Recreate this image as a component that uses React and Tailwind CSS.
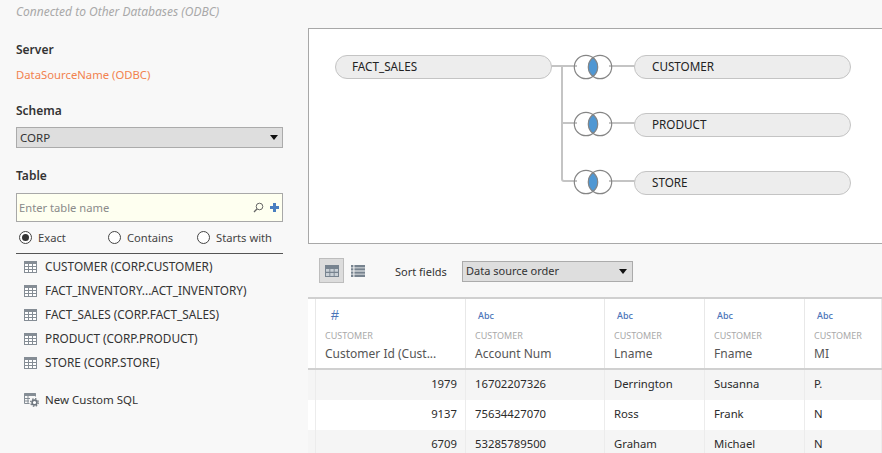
import React from 'react';

const font = { fontFamily: '"Noto Sans", "Open Sans", sans-serif' };

const tables = [
  'CUSTOMER (CORP.CUSTOMER)',
  'FACT_INVENTORY...ACT_INVENTORY)',
  'FACT_SALES (CORP.FACT_SALES)',
  'PRODUCT (CORP.PRODUCT)',
  'STORE (CORP.STORE)',
];

const columns = [
  { name: 'Customer Id (Cust...', type: '#', width: 'w-[150px]' },
  { name: 'Account Num', type: 'Abc', width: 'w-[139px]' },
  { name: 'Lname', type: 'Abc', width: 'w-[100px]' },
  { name: 'Fname', type: 'Abc', width: 'w-[100px]' },
  { name: 'MI', type: 'Abc', width: 'flex-1' },
];

const rows = [
  ['1979', '16702207326', 'Derrington', 'Susanna', 'P.'],
  ['9137', '75634427070', 'Ross', 'Frank', 'N'],
  ['6709', '53285789500', 'Graham', 'Michael', 'N'],
];

const joins = [
  { name: 'CUSTOMER', top: 'top-[26px]', iconTop: 'top-[25px]' },
  { name: 'PRODUCT', top: 'top-[84px]', iconTop: 'top-[82px]' },
  { name: 'STORE', top: 'top-[142px]', iconTop: 'top-[140px]' },
];

function GridIcon() {
  return (
    <svg width="13" height="12" viewBox="0 0 13 12" className="text-[#858d95]">
      <rect x="0.5" y="0.5" width="12" height="11" fill="#fff" stroke="currentColor" />
      <path d="M0 0.5h13v2.5H0z" fill="currentColor" />
      <path d="M4.5 3v8M8.5 3v8M1 5.5h11M1 8.5h11" stroke="currentColor" fill="none" />
    </svg>
  );
}

function SolidGridIcon() {
  return (
    <svg width="14" height="12" viewBox="0 0 14 12" className="text-[#77838f]">
      <rect width="14" height="12" fill="currentColor" />
      <path d="M1 4h3.4v2.8H1zM5.3 4h3.4v2.8H5.3zM9.6 4H13v2.8H9.6zM1 8h3.4v3H1zM5.3 8h3.4v3H5.3zM9.6 8H13v3H9.6z" fill="#c9d0d6" />
    </svg>
  );
}

function ListIcon() {
  return (
    <svg width="14" height="12" viewBox="0 0 14 12" className="ml-[7px] text-[#77838f]" fill="currentColor">
      <path d="M0 0h2.4v2.4H0zM3.4 0H14v2.4H3.4zM0 3.2h2.4v2.4H0zM3.4 3.2H14v2.4H3.4zM0 6.4h2.4v2.4H0zM3.4 6.4H14v2.4H3.4zM0 9.6h2.4V12H0zM3.4 9.6H14V12H3.4z" />
    </svg>
  );
}

function SqlIcon() {
  return (
    <svg width="15" height="14" viewBox="0 0 15 14" className="text-[#858d95]">
      <path d="M0.5 0.5h11v3M0.5 0.5v10h5" fill="none" stroke="currentColor" />
      <path d="M0 0.5h12v2.5H0z" fill="currentColor" />
      <path d="M4 3v7.5M1 5.5h5M1 8h4" stroke="currentColor" fill="none" />
      <circle cx="10.5" cy="9.5" r="2.4" fill="#fff" stroke="#6f777f" strokeWidth="1.6" />
      <circle cx="10.5" cy="9.5" r="3.8" fill="none" stroke="#6f777f" strokeWidth="1.3" strokeDasharray="1.5 1.5" />
    </svg>
  );
}

function Caret() {
  return <span className="w-0 h-0 border-x-[4px] border-x-transparent border-t-[5px] border-t-[#111]" />;
}

function Radio({ label, checked, className }) {
  return (
    <div className={`flex items-center gap-[6px] ${className}`}>
      <span className="w-[13px] h-[13px] rounded-full border border-[#444] bg-white flex items-center justify-center">
        {checked && <span className="w-[7px] h-[7px] rounded-full bg-[#333]" />}
      </span>
      <span>{label}</span>
    </div>
  );
}

function JoinIcon() {
  return (
    <svg width="40" height="26" viewBox="0 0 40 26">
      <path d="M20 3.2a12 12 0 0 1 0 19.6a12 12 0 0 1 0-19.6z" fill="#4f97d3" />
      <circle cx="13" cy="13" r="11.7" fill="none" stroke="#858585" strokeWidth="1.2" />
      <circle cx="27" cy="13" r="11.7" fill="none" stroke="#858585" strokeWidth="1.2" />
    </svg>
  );
}

function Pill({ children, className }) {
  return (
    <div className={`absolute w-[217px] h-[24px] rounded-full bg-[#ededed] border border-[#c4c4c4] flex items-center text-[11.7px] text-[#222] ${className}`}>
      {children}
    </div>
  );
}

function Canvas() {
  return (
    <div className="relative h-[216px] bg-white border border-[#a8a8a8] border-r-0 overflow-hidden">
      <svg width="330" height="216" className="absolute left-0 top-0" fill="none" stroke="#c4c4c4" strokeWidth="2">
        <path d="M240 37H268M253 37V150Q253 152 255 152H268M253 94H268" />
        <path d="M300 37H328M300 94H328M300 152H328" />
      </svg>
      <Pill className="left-[26px] top-[26px] pl-[16px]">FACT_SALES</Pill>
      {joins.map((join) => (
        <React.Fragment key={join.name}>
          <div className={`absolute left-[264px] ${join.iconTop}`}>
            <JoinIcon />
          </div>
          <Pill className={`left-[325px] pl-[17px] ${join.top}`}>{join.name}</Pill>
        </React.Fragment>
      ))}
    </div>
  );
}

function Sidebar() {
  return (
    <aside className="w-[308px] shrink-0 pl-4 pr-[25px] text-[11.5px] text-[#333]">
      <div className="h-[24px] pt-[3px] text-[12px] text-[#a9a9a9] italic leading-[18px]">Connected to Other Databases (ODBC)</div>
      <div className="mt-[17px] text-[12px] font-semibold text-[#333] leading-[18px]">Server</div>
      <div className="mt-[7px] text-[11.3px] text-[#f2824e] leading-[18px]">DataSourceName (ODBC)</div>
      <div className="mt-[18px] text-[12px] font-semibold leading-[18px]">Schema</div>
      <div className="mt-[7px] h-[21px] bg-[#dedede] border border-[#ababab] flex items-center justify-between pl-[3px] pr-[4px]">
        <span>CORP</span>
        <Caret />
      </div>
      <div className="mt-[19px] text-[12px] font-semibold leading-[18px]">Table</div>
      <div className="mt-[8px] h-[29px] bg-[#fefff0] border border-[#a8a8a8] flex items-center pl-[2px] pr-[3px]">
        <span className="flex-1 pt-[1px] text-[11.2px] text-[#8a8a8a]">Enter table name</span>
        <svg width="11" height="11" viewBox="0 0 11 11" fill="none" stroke="#666" className="mr-[6px]">
          <circle cx="6.5" cy="4.5" r="3.3" />
          <path d="M4 7L1 10" strokeWidth="1.3" />
        </svg>
        <svg width="9" height="9" viewBox="0 0 9 9" fill="#4a7fc0">
          <path d="M3 0h3v3h3v3H6v3H3V6H0V3h3z" />
        </svg>
      </div>
      <div className="mt-[4px] h-[24px] flex items-center pl-[3px] border-b border-[#555] pb-[3px] box-content text-[11.2px] text-[#444]">
        <Radio label="Exact" checked className="w-[89px]" />
        <Radio label="Contains" className="w-[89px]" />
        <Radio label="Starts with" />
      </div>
      <div className="mt-[1px] pl-[8px]">
        {tables.map((table) => (
          <div key={table} className="h-[24px] flex items-center gap-[8px] text-[11.8px] text-[#333]">
            <GridIcon />
            <span>{table}</span>
          </div>
        ))}
        <div className="mt-[13px] h-[24px] flex items-center gap-[6px]">
          <SqlIcon />
          <span>New Custom SQL</span>
        </div>
      </div>
    </aside>
  );
}

function Toolbar() {
  return (
    <div className="h-[53px] flex items-center pl-[11px] text-[11px] text-[#333]">
      <div className="w-[25px] h-[25px] bg-[#dcdcdc] border border-[#bdbdbd] flex items-center justify-center">
        <SolidGridIcon />
      </div>
      <ListIcon />
      <span className="ml-[30px] w-[67px] mt-[3px]">Sort fields</span>
      <div className="w-[171px] h-[21px] mt-[1px] bg-[#dedede] border border-[#ababab] flex items-center justify-between pl-[3px] pr-[5px]">
        <span>Data source order</span>
        <Caret />
      </div>
    </div>
  );
}

function DataGrid() {
  return (
    <div className="flex-1 bg-white border-t-2 border-[#d0d0d0] text-[12px] overflow-hidden">
      <div className="h-[71px] flex border-b-2 border-[#d0d0d0]">
        <div className="w-[8px] border-r border-[#e8e8e8]" />
        {columns.map((col) => (
          <div key={col.name} className={`${col.width} border-r border-[#e8e8e8] pl-[9px] overflow-hidden`}>
            {col.type === '#' ? (
              <div className="h-[28px] pt-[8px] pl-[6px] font-['Liberation_Sans'] text-[14px] leading-[16px] text-[#4a74b8]">#</div>
            ) : (
              <div className="h-[28px] pt-[9px] pl-[3px] text-[9px] font-medium leading-[16px] text-[#4a74b8]">Abc</div>
            )}
            <div className="mt-[2px] text-[9px] leading-[14px] text-[#a9a9a9]">CUSTOMER</div>
            <div className="mt-[2px] leading-[18px] text-[#555]">{col.name}</div>
          </div>
        ))}
      </div>
      {rows.map((row, r) => (
        <div key={row[0]} className={`h-[30px] flex items-center ${r % 2 === 0 ? 'bg-[#f5f5f5]' : 'bg-white'}`}>
          <div className="w-[8px] h-full border-r border-[#ececec]" />
          {row.map((cell, i) => (
            <div
              key={i}
              className={`h-full flex items-center pb-[2px] text-[11.3px] border-r border-[#ececec] text-[#2b2b2b] ${columns[i].width} ${i === 0 ? 'justify-end pr-[8px]' : 'pl-[9px]'}`}
            >
              {cell}
            </div>
          ))}
        </div>
      ))}
    </div>
  );
}

export default function App() {
  return (
    <div className="w-[882px] h-[453px] flex bg-[#f8f8f8] overflow-hidden" style={font}>
      <Sidebar />
      <main className="flex-1 flex flex-col pt-[28px] min-w-0">
        <Canvas />
        <Toolbar />
        <DataGrid />
      </main>
    </div>
  );
}
